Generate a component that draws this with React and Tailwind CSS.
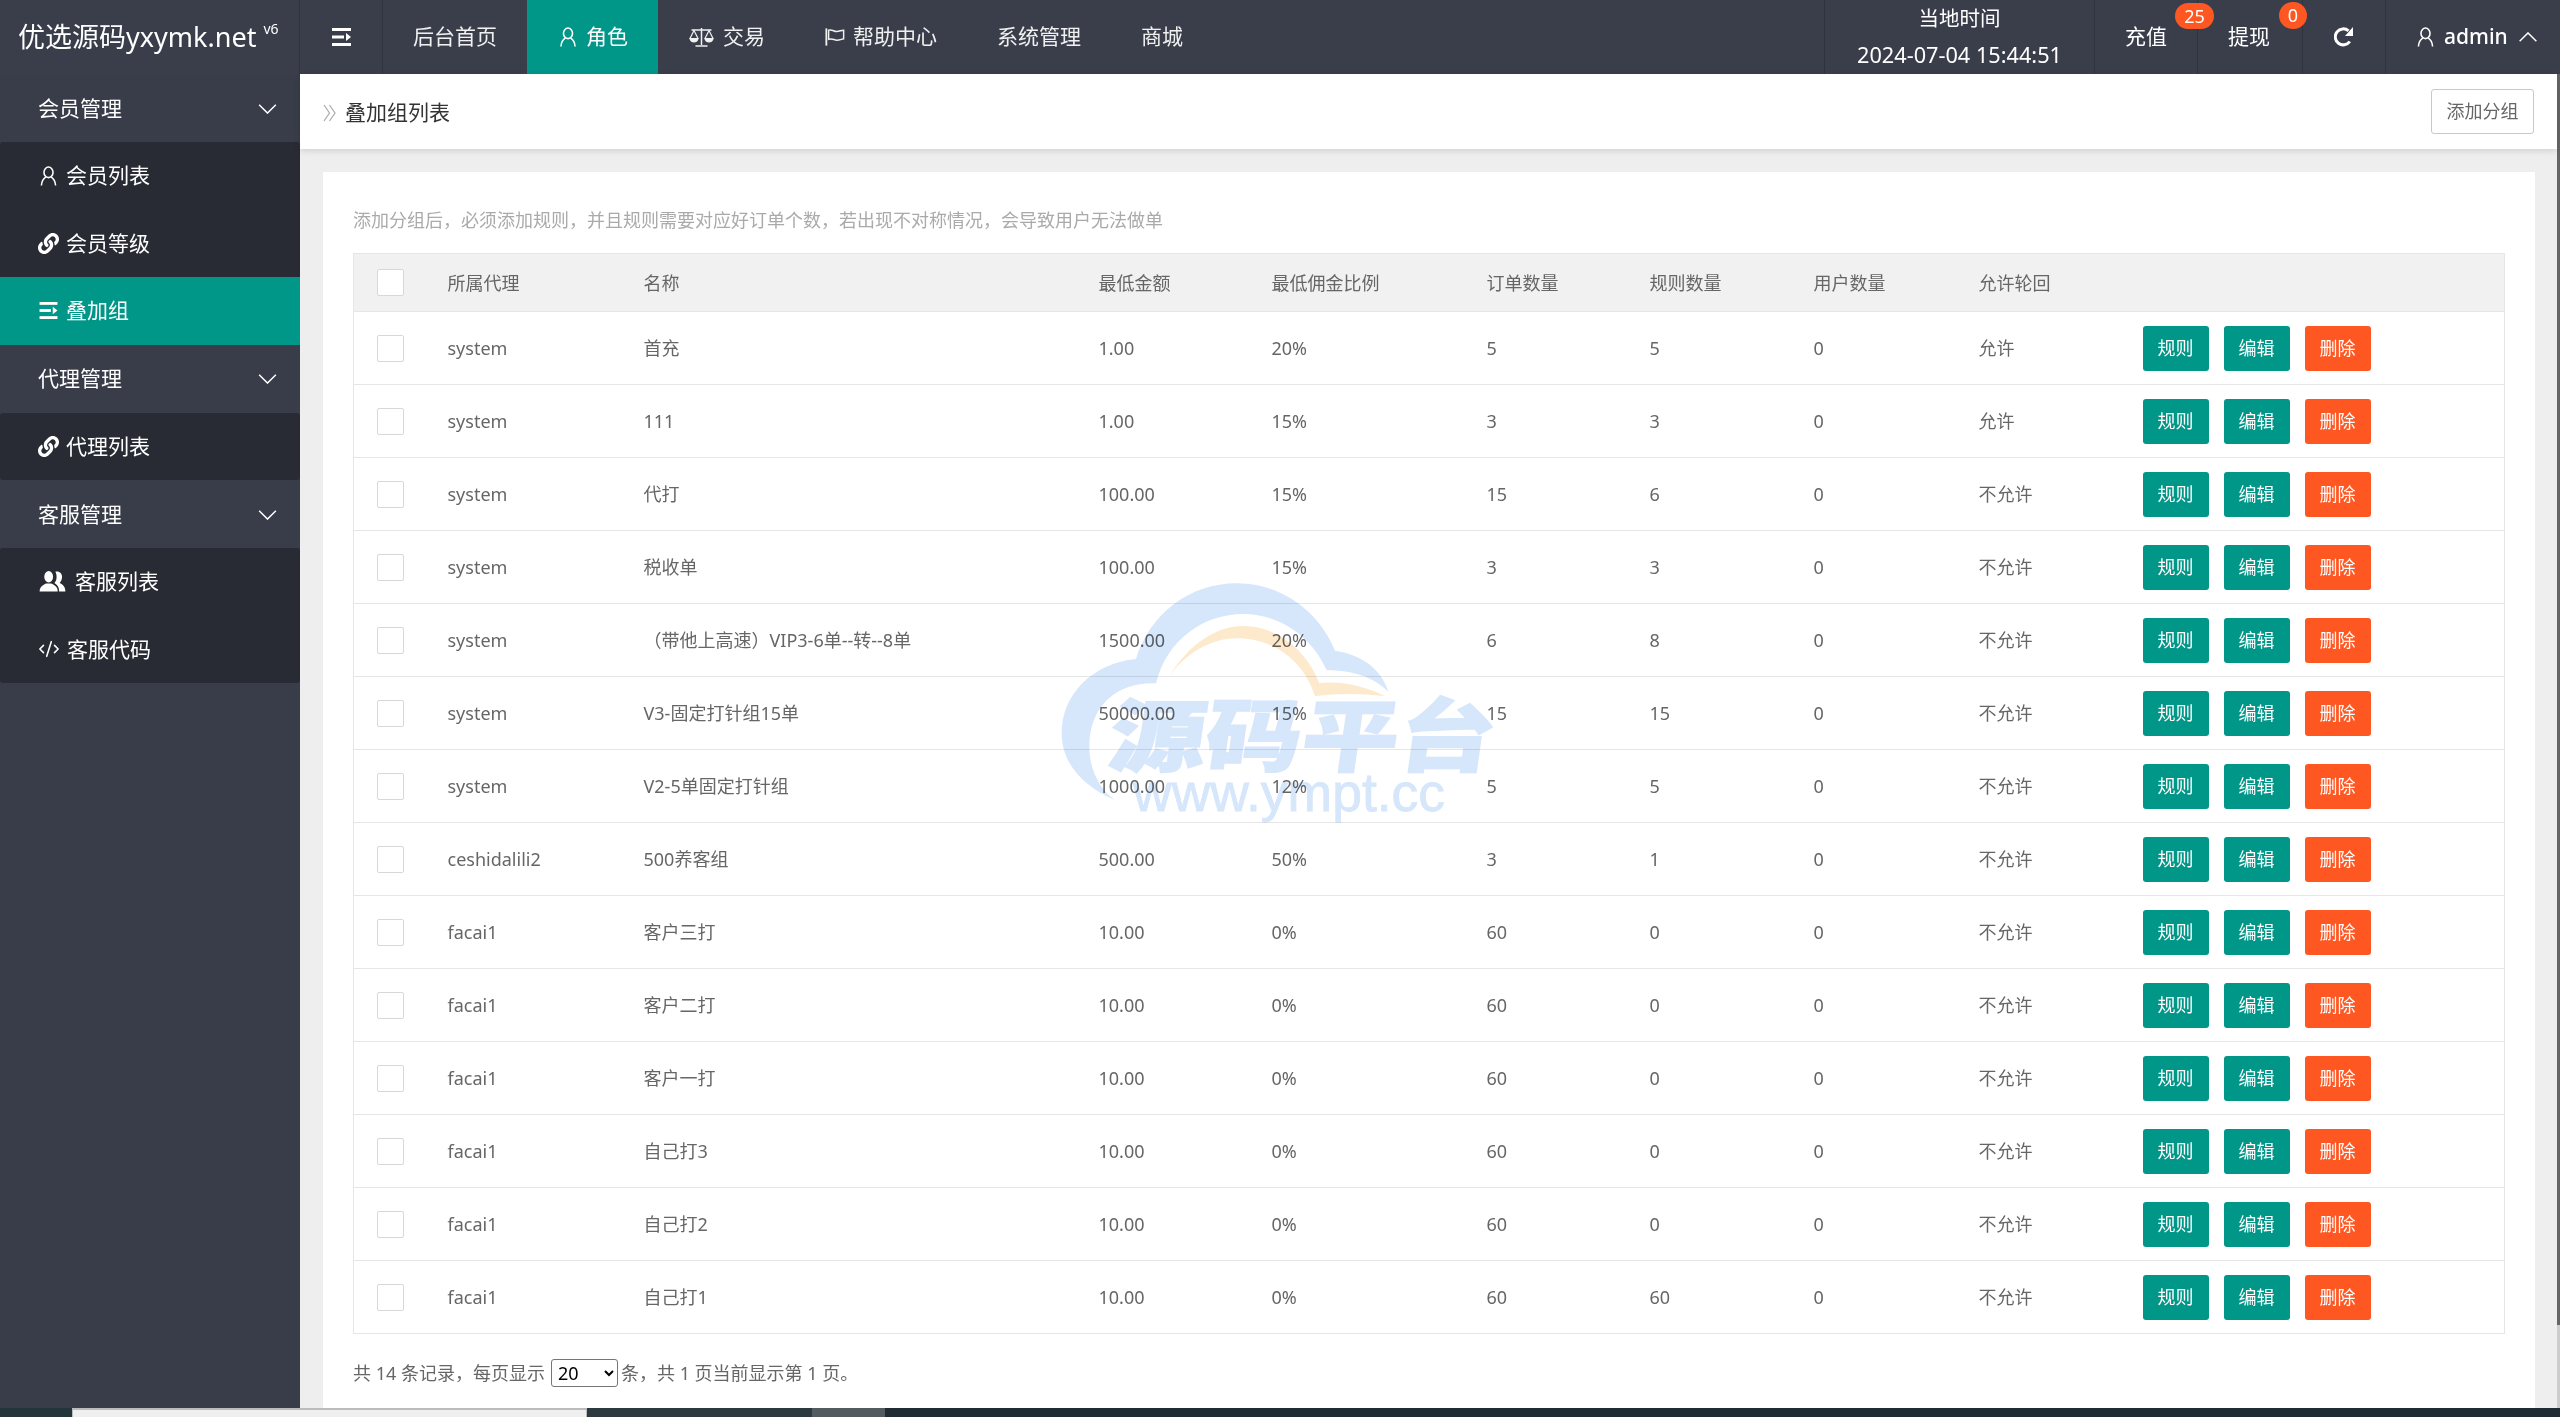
import { FaLink } from 'react-icons/fa'
import { CodeXml } from 'lucide-react'

const font = "font-['Noto_Sans','Noto_Sans_CJK_SC',sans-serif]"

const rows = [
  ['system', '首充', '1.00', '20%', '5', '5', '0', '允许'],
  ['system', '111', '1.00', '15%', '3', '3', '0', '允许'],
  ['system', '代打', '100.00', '15%', '15', '6', '0', '不允许'],
  ['system', '税收单', '100.00', '15%', '3', '3', '0', '不允许'],
  ['system', '（带他上高速）VIP3-6单--转--8单', '1500.00', '20%', '6', '8', '0', '不允许'],
  ['system', 'V3-固定打针组15单', '50000.00', '15%', '15', '15', '0', '不允许'],
  ['system', 'V2-5单固定打针组', '1000.00', '12%', '5', '5', '0', '不允许'],
  ['ceshidalili2', '500养客组', '500.00', '50%', '3', '1', '0', '不允许'],
  ['facai1', '客户三打', '10.00', '0%', '60', '0', '0', '不允许'],
  ['facai1', '客户二打', '10.00', '0%', '60', '0', '0', '不允许'],
  ['facai1', '客户一打', '10.00', '0%', '60', '0', '0', '不允许'],
  ['facai1', '自己打3', '10.00', '0%', '60', '0', '0', '不允许'],
  ['facai1', '自己打2', '10.00', '0%', '60', '0', '0', '不允许'],
  ['facai1', '自己打1', '10.00', '0%', '60', '60', '0', '不允许'],
]

const heads = ['所属代理', '名称', '最低金额', '最低佣金比例', '订单数量', '规则数量', '用户数量', '允许轮回']

function UserIcon({ className }) {
  return (
    <svg viewBox="0 0 18 22" fill="none" stroke="currentColor" strokeWidth="1.7" className={className}>
      <ellipse cx="9" cy="7" rx="5" ry="5.8" />
      <path d="M6.2 12 C3 14 1.5 17 1.2 21.5 M11.8 12 C15 14 16.5 17 16.8 21.5" />
    </svg>
  )
}

function UsersIcon({ className }) {
  return (
    <svg viewBox="0 0 27 22" fill="currentColor" className={className}>
      <ellipse cx="9.5" cy="6" rx="4.6" ry="6" />
      <path d="M0 21.5 C0 16.5 3.5 14.8 6.8 13.2 L12.2 13.2 C15.5 14.8 19 16.5 19 21.5 Z" />
      <path d="M16.5 0.8 C19.5 0 23.5 2 23.5 6 C23.5 9 22.5 11 21 12.2 C23.5 14 27 15.5 27 21.5 L20.5 21.5 C20.5 17 18.5 14.5 15.5 12.6 C17 11 17.8 9 17.8 6 C17.8 4 17.3 2.2 16.5 0.8 Z" />
    </svg>
  )
}

function ShrinkIcon({ className }) {
  return (
    <svg viewBox="0 0 19 18" fill="currentColor" className={className}>
      <rect x="0" y="0" width="19" height="3" />
      <rect x="0" y="7.5" width="12" height="3" />
      <path d="M14 5 L19 9 L14 13 Z" />
      <rect x="0" y="15" width="19" height="3" />
    </svg>
  )
}

function ScaleIcon({ className }) {
  return (
    <svg viewBox="0 0 26 20" fill="none" stroke="currentColor" strokeWidth="1.5" className={className}>
      <path d="M13 1 V18 M7 19 H19 M3 3 H23" />
      <path d="M5.5 3.5 L1.5 11.5 H9.5 Z M20.5 3.5 L16.5 11.5 H24.5 Z" strokeWidth="1.2" />
      <path d="M1 12 H10 C9.5 14.5 7.5 15.5 5.5 15.5 C3.5 15.5 1.5 14.5 1 12 Z M16 12 H25 C24.5 14.5 22.5 15.5 20.5 15.5 C18.5 15.5 16.5 14.5 16 12 Z" fill="currentColor" stroke="none" />
    </svg>
  )
}

function FlagIcon({ className }) {
  return (
    <svg viewBox="0 0 22 20" fill="none" stroke="currentColor" className={className}>
      <path d="M1.5 0.5 V19.5" strokeWidth="2" />
      <path d="M4 2.5 C8 1 10 4.5 13 4 C16 3.8 18 2.5 20.5 2.5 V12 C18 12.5 16 13.5 13 13.5 C10 13.5 8 11 4 12.5 Z" strokeWidth="1.6" />
    </svg>
  )
}

function RefreshIcon({ className }) {
  return (
    <svg viewBox="0 0 20 20" fill="none" stroke="currentColor" className={className}>
      <path d="M15.8 14.5 A8 8 0 1 1 14.5 3.8" strokeWidth="3" />
      <path d="M19 0 V9 H11 Z" fill="currentColor" stroke="none" />
    </svg>
  )
}

function Chevron({ up, className }) {
  return (
    <svg viewBox="0 0 20 11" fill="none" stroke="currentColor" strokeWidth="1.6" className={className}>
      <path d={up ? 'M0.8 10.2 L10 1 L19.2 10.2' : 'M0.8 0.8 L10 10 L19.2 0.8'} />
    </svg>
  )
}

function Crumb({ className }) {
  return (
    <svg viewBox="0 0 13 18" fill="none" stroke="currentColor" strokeWidth="1.2" className={className}>
      <path d="M1 1 L6.5 9 L1 17 M6.5 1 L12 9 L6.5 17" />
    </svg>
  )
}

function Watermark() {
  return (
    <svg viewBox="0 0 500 300" className="pointer-events-none absolute left-[720px] top-[486px] h-[300px] w-[500px] overflow-visible mix-blend-multiply">
      <g transform="scale(0.33333)">
        <path fill="#d6e6fb" d="M285 720 C190 680 125 610 125 520 C125 400 220 310 348 297 C390 160 510 70 650 70 C790 70 900 160 945 272 C1030 285 1085 330 1105 395 C1060 350 1000 332 920 330 C870 220 770 162 670 162 C550 162 440 240 408 370 C300 365 208 430 208 560 C208 630 240 690 285 720 Z" />
        <path fill="#fde9cb" d="M450 345 C510 250 590 198 670 198 C770 198 860 270 898 370 C960 360 1040 380 1095 408 C1020 400 950 400 885 408 C850 300 760 235 650 235 C570 235 500 280 450 345 Z" />
      </g>
      <text transform="translate(86 205) skewX(-8) scale(1.22 1)" fill="#d6e6fb" stroke="#d6e6fb" strokeWidth="1.5" fontSize="79" fontWeight="900" fontFamily="'Noto Sans CJK SC', sans-serif">源码平台</text>
      <text x="113" y="251" fill="#d6e6fb" stroke="#d6e6fb" strokeWidth="0.8" fontSize="53.5" fontFamily="'Liberation Sans', sans-serif">www.ympt.cc</text>
    </svg>
  )
}

function NavItem({ icon, children, active }) {
  return (
    <div className={`flex h-full items-center gap-[8px] px-[30px] text-[21px] text-[#f0f0f0] ${active ? 'bg-[#009688] text-white' : ''}`}>
      {icon}
      <span>{children}</span>
    </div>
  )
}

function SideGroup({ children }) {
  return (
    <div className="flex h-[68px] items-center justify-between pl-[38px] pr-[23px] pt-[1px] text-[21px] text-white">
      <span>{children}</span>
      <Chevron className="h-[10px] w-[19px]" />
    </div>
  )
}

function SideItem({ icon, children, active, gap = 'gap-[7px]' }) {
  return (
    <div className={`flex h-[67.5px] items-center ${gap} pl-[38px] text-[21px] text-white ${active ? 'bg-[#009688]' : ''}`}>
      <span className="flex w-auto shrink-0 items-center">{icon}</span>
      <span>{children}</span>
    </div>
  )
}

function Box() {
  return <div className="h-[27px] w-[27px] rounded-[2px] border border-[#d8d8d8] bg-white" />
}

function Btn({ children, color }) {
  return <button className={`h-[45px] w-[66px] rounded-[3px] text-[18px] text-white ${color}`}>{children}</button>
}

export default function App() {
  return (
    <div className={`flex h-screen flex-col overflow-hidden bg-[#eeeeee] ${font}`}>
      <header className="flex h-[74px] shrink-0 items-stretch bg-[#3a3e4b]">
        <div className="flex w-[300px] shrink-0 items-center border-r border-[#30333e] pl-[18px] text-[27px] text-white">
          <span>优选源码yxymk.net</span>
          <sup className="relative -top-[8px] ml-[7px] text-[14px]">v6</sup>
        </div>
        <div className="flex w-[83px] shrink-0 items-center justify-center border-r border-[#30333e] text-white">
          <ShrinkIcon className="h-[18px] w-[19px]" />
        </div>
        <NavItem>后台首页</NavItem>
        <NavItem active icon={<UserIcon className="ml-[2px] mr-[1px] h-[20px] w-[18px]" />}>角色</NavItem>
        <NavItem icon={<ScaleIcon className="h-[20px] w-[27px]" />}>交易</NavItem>
        <NavItem icon={<FlagIcon className="h-[20px] w-[20px]" />}>帮助中心</NavItem>
        <NavItem>系统管理</NavItem>
        <NavItem>商城</NavItem>
        <div className="ml-auto flex w-[271px] flex-col items-center justify-center gap-[9px] border-x border-[#30333e] pb-[2px] leading-[27px] text-white">
          <span className="text-[20.5px]">当地时间</span>
          <span className="text-[21.7px]">2024-07-04 15:44:51</span>
        </div>
        <div className="relative flex w-[103px] items-center border-r border-[#30333e] pl-[30px] text-[21px] text-white">
          充值
          <span className="absolute left-[80px] top-[3px] flex h-[26px] w-[39px] items-center justify-center rounded-full bg-[#ff5722] text-[18px]">25</span>
        </div>
        <div className="relative flex w-[105px] items-center border-r border-[#30333e] pl-[30px] text-[21px] text-white">
          提现
          <span className="absolute left-[81px] top-[2px] flex h-[27px] w-[28px] items-center justify-center rounded-full bg-[#ff5722] text-[18px]">0</span>
        </div>
        <div className="flex w-[83px] items-center justify-center border-r border-[#30333e] text-white">
          <RefreshIcon className="h-[20px] w-[20px]" />
        </div>
        <div className="flex w-[174px] items-center gap-[10px] pl-[31px] text-[21px] font-medium text-white">
          <UserIcon className="h-[20px] w-[17px]" />
          <span>admin</span>
          <Chevron up className="h-[10px] w-[20px]" />
        </div>
      </header>

      <div className="flex min-h-0 flex-1">
        <aside className="w-[300px] shrink-0 bg-[#393d49]">
          <SideGroup>会员管理</SideGroup>
          <div className="overflow-hidden rounded-t-[3px] bg-[#282b33]">
            <SideItem icon={<UserIcon className="ml-[2px] h-[20px] w-[17px]" />} gap="gap-[9px]">会员列表</SideItem>
            <SideItem icon={<FaLink className="h-[21px] w-[21px]" />}>会员等级</SideItem>
            <SideItem active icon={<ShrinkIcon className="ml-[1px] h-[17px] w-[19px]" />} gap="gap-[8px]">叠加组</SideItem>
          </div>
          <SideGroup>代理管理</SideGroup>
          <div className="overflow-hidden rounded-[3px] bg-[#282b33]">
            <SideItem icon={<FaLink className="h-[21px] w-[21px]" />}>代理列表</SideItem>
          </div>
          <SideGroup>客服管理</SideGroup>
          <div className="overflow-hidden rounded-[3px] bg-[#282b33]">
            <SideItem icon={<UsersIcon className="ml-[1px] h-[21px] w-[27px]" />} gap="gap-[9px]">客服列表</SideItem>
            <SideItem icon={<CodeXml className="h-[22px] w-[22px]" strokeWidth={1.7} />}>客服代码</SideItem>
          </div>
        </aside>

        <main className="relative flex min-w-0 flex-1 flex-col">
          <div className="flex h-[75px] shrink-0 items-center justify-between bg-white pl-[23px] pr-[23px] shadow-[0_2px_6px_rgba(0,0,0,0.12)]">
            <div className="flex items-center gap-[9px] pt-[2px]">
              <Crumb className="h-[18px] w-[13px] text-[#aaaaaa]" />
              <span className="text-[21px] text-[#333333]">叠加组列表</span>
            </div>
            <button className="h-[45px] w-[103px] rounded-[3px] border border-[#c9c9c9] bg-white text-[18px] text-[#666666]">添加分组</button>
          </div>

          <div className="ml-[23px] mr-[22px] mt-[23px] flex-1 bg-white pl-[30px] pt-[35px]">
            <p className="text-[18px] leading-[26px] text-[#aaaaaa]">添加分组后，必须添加规则，并且规则需要对应好订单个数，若出现不对称情况，会导致用户无法做单</p>
            <table className="mt-[20px] w-[2152px] table-fixed border-collapse border border-[#e6e6e6] text-[18px] text-[#666666]">
              <colgroup>
                <col className="w-[94px]" />
                <col className="w-[196px]" />
                <col className="w-[455px]" />
                <col className="w-[173px]" />
                <col className="w-[215px]" />
                <col className="w-[163px]" />
                <col className="w-[164px]" />
                <col className="w-[165px]" />
                <col className="w-[164px]" />
                <col />
              </colgroup>
              <thead>
                <tr className="h-[58px] bg-[#f1f1f1]">
                  <th className="pl-[23px] font-normal"><Box /></th>
                  {heads.map((h) => (
                    <th key={h} className="pt-[2px] text-left font-normal">{h}</th>
                  ))}
                  <th />
                </tr>
              </thead>
              <tbody>
                {rows.map((r, i) => (
                  <tr key={i} className="h-[73px] border-t border-[#e6e6e6]">
                    <td className="pl-[23px]"><Box /></td>
                    {r.map((c, j) => (
                      <td key={j}>{c}</td>
                    ))}
                    <td>
                      <div className="flex gap-[15px]">
                        <Btn color="bg-[#009688]">规则</Btn>
                        <Btn color="bg-[#009688]">编辑</Btn>
                        <Btn color="bg-[#ff5722]">删除</Btn>
                      </div>
                    </td>
                  </tr>
                ))}
              </tbody>
            </table>
            <div className="mt-[25px] flex items-center gap-[1px] text-[18px] text-[#666666]">
              <span>共 14 条记录，每页显示</span>
              <select defaultValue="20" className="ml-[5px] mr-[2px] h-[28px] w-[67px] rounded-[3px] border border-[#767676] bg-white pl-[2px] text-[18px] text-black">
                <option value="20">20</option>
              </select>
              <span>条，共 1 页当前显示第 1 页。</span>
            </div>
          </div>
          <Watermark />
        </main>

        <div className="flex w-[3px] shrink-0 flex-col bg-[#cccccc]">
          <div className="h-[1251px] bg-[#666666]" />
        </div>
      </div>

      <footer className="flex h-[9px] shrink-0 bg-[#1f2c34]">
        <div className="w-[72px] bg-[#24343b]" />
        <div className="w-[515px] border-x border-t-2 border-[#bbbbbb] bg-[#efefef]" />
        <div className="w-[225px] bg-[#2b3a3e]" />
        <div className="w-[73px] bg-[#525c60]" />
        <div className="flex-1 bg-[#1f2c34]" />
      </footer>
    </div>
  )
}
